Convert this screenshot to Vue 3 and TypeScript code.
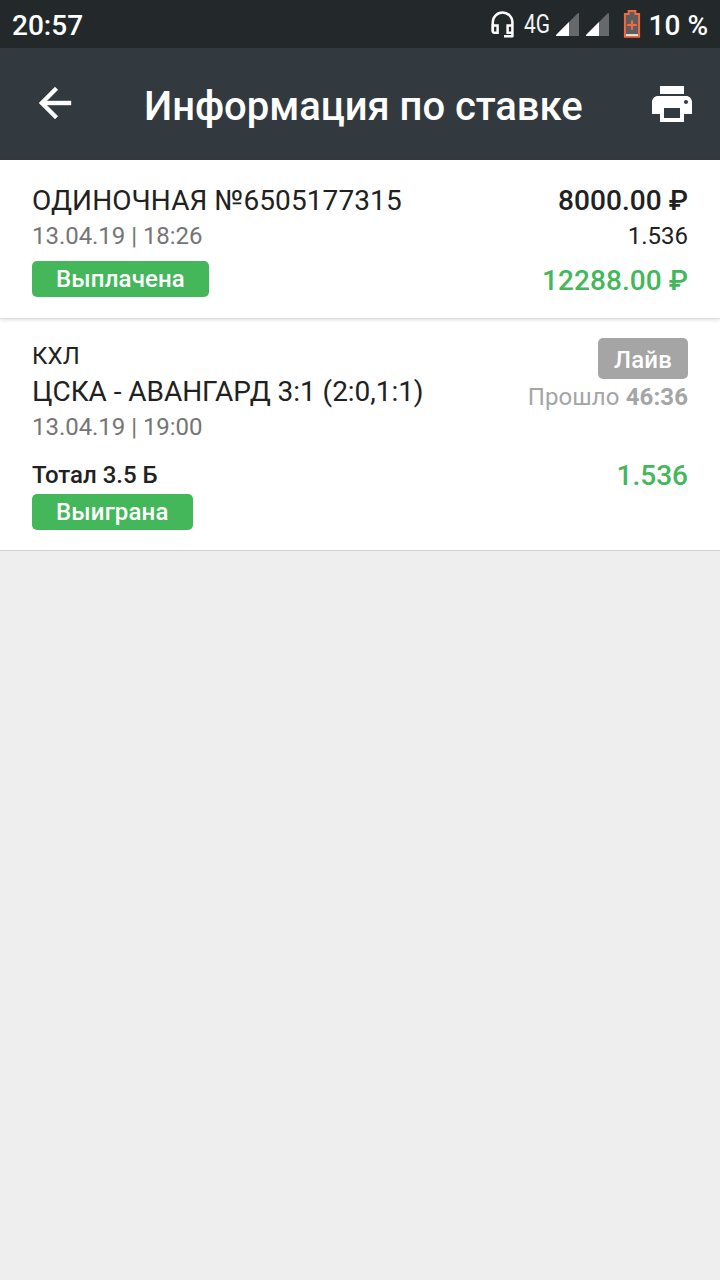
<script setup lang="ts">
interface Bet {
  title: string
  date: string
  status: string
  stake: string
  odds: string
  payout: string
}

interface BetEvent {
  league: string
  match: string
  date: string
  outcome: string
  status: string
  mode: string
  elapsedLabel: string
  elapsed: string
  odds: string
}

const bet: Bet = {
  title: 'ОДИНОЧНАЯ №6505177315',
  date: '13.04.19 | 18:26',
  status: 'Выплачена',
  stake: '8000.00 ₽',
  odds: '1.536',
  payout: '12288.00 ₽',
}

const event: BetEvent = {
  league: 'КХЛ',
  match: 'ЦСКА - АВАНГАРД 3:1 (2:0,1:1)',
  date: '13.04.19 | 19:00',
  outcome: 'Тотал 3.5 Б',
  status: 'Выиграна',
  mode: 'Лайв',
  elapsedLabel: 'Прошло',
  elapsed: '46:36',
  odds: '1.536',
}
</script>

<template>
  <div class="screen">
    <div class="status-bar">
      <span class="clock">20:57</span>
      <div class="indicators">
        <svg class="headset" width="26" height="30" viewBox="0 0 26 30" fill="none" stroke="#fff" stroke-width="2.5">
          <path d="M2.8 21.5V12.2A9.8 9.8 0 0 1 22.4 12.2V26.2H14" stroke-linejoin="round" />
          <path d="M2.8 15.6H7.6V22.8H4.3Q2.8 22.8 2.8 21.3Z M22.4 15.6H17.6V22.8H22.4" />
        </svg>
        <svg class="network" width="28" height="32" viewBox="0 0 28 32">
          <text x="0" y="23.5" textLength="26" lengthAdjust="spacingAndGlyphs">4G</text>
        </svg>
        <svg v-for="n in 2" :key="n" class="signal" width="23" height="23" viewBox="0 0 23 23">
          <path d="M.5 21.5L21.5 .5Q23 -.7 23 1V23H1Q-.8 23 .5 21.5Z" fill="#65696c" />
          <path d="M.5 21.5L13 9V23H1Q-.8 23 .5 21.5Z" fill="#fff" />
        </svg>
        <svg class="battery" width="18" height="28" viewBox="0 0 18 28">
          <path d="M5.6 1H12.4V4H16.1V26.8H1.9V4H5.6Z" fill="#5b5d5e" stroke="#f4693f" stroke-width="2" />
          <path d="M3 25H15" stroke="#fff" stroke-width="1.6" />
          <path d="M9 10.2V19.8M4.2 15H13.8" stroke="#f4693f" stroke-width="2.2" />
        </svg>
        <span class="percent">10 %</span>
      </div>
    </div>

    <header class="app-bar">
      <svg class="back" width="48" height="48" viewBox="0 0 24 24" fill="#fff" stroke="#fff" stroke-width="0.2">
        <path d="M20 11H7.83l5.59-5.59L12 4l-8 8 8 8 1.41-1.41L7.83 13H20v-2z" />
      </svg>
      <h1>Информация по ставке</h1>
      <svg class="print" width="48" height="48" viewBox="0 0 24 24" fill="#fff">
        <path d="M19 8H5c-1.66 0-3 1.34-3 3v6h4v4h12v-4h4v-6c0-1.66-1.34-3-3-3zm-3 11H8v-5h8v5zm3-7c-.55 0-1-.45-1-1s.45-1 1-1 1 .45 1 1-.45 1-1 1zm-1-9H6v4h12V3z" />
      </svg>
    </header>

    <section class="summary">
      <div class="column">
        <div class="large title">{{ bet.title }}</div>
        <div class="small muted">{{ bet.date }}</div>
        <span class="badge">{{ bet.status }}</span>
      </div>
      <div class="column right">
        <div class="large strong sum">{{ bet.stake }}</div>
        <div class="small">{{ bet.odds }}</div>
        <div class="large strong sum win payout">{{ bet.payout }}</div>
      </div>
    </section>

    <section class="event">
      <div class="column">
        <div class="small">{{ event.league }}</div>
        <div class="large match">{{ event.match }}</div>
        <div class="small muted">{{ event.date }}</div>
        <div class="small strong outcome">{{ event.outcome }}</div>
        <span class="badge">{{ event.status }}</span>
      </div>
      <div class="column right">
        <span class="badge live">{{ event.mode }}</span>
        <div class="small elapsed">{{ event.elapsedLabel }} <b>{{ event.elapsed }}</b></div>
        <div class="large strong win event-odds">{{ event.odds }}</div>
      </div>
    </section>
  </div>
</template>

<style>
body {
  margin: 0;
  background: #eee;
}
</style>

<style scoped>
.screen {
  width: 720px;
  height: 1280px;
  background: #eee;
  color: #212121;
  font-family: Roboto, "Noto Sans", sans-serif;
  overflow: hidden;
}
.status-bar {
  box-sizing: border-box;
  height: 48px;
  padding: 0 12px;
  display: flex;
  justify-content: space-between;
  background: #23282b;
  color: #fff;
  font-size: 28px;
  font-weight: 500;
  line-height: 33px;
}
.clock,
.percent {
  margin-top: 9px;
  white-space: nowrap;
}
.indicators {
  display: flex;
  align-items: flex-start;
}
.headset {
  margin: 10px 8px 0 0;
}
.network {
  margin: 9px 4px 0 0;
  overflow: visible;
  font-size: 25px;
  font-weight: 400;
  line-height: 29px;
  fill: #f2f3f3;
}
.signal {
  margin: 13px 7px 0 0;
}
.battery {
  margin: 10px 8px 0 7px;
}
.app-bar {
  box-sizing: border-box;
  height: 112px;
  padding: 0 24px 0 31px;
  display: flex;
  align-items: center;
  background: #323a40;
  color: #fff;
}
.back {
  margin-top: -2px;
}
h1 {
  flex: 1;
  margin: 4px 0 0 65px;
  font-size: 40px;
  font-weight: 500;
  letter-spacing: -0.04px;
  line-height: 47px;
  white-space: nowrap;
}
.summary,
.event {
  box-sizing: border-box;
  display: flex;
  justify-content: space-between;
  padding: 0 32px;
  background: #fff;
}
.summary {
  position: relative;
  height: 159px;
  padding-top: 24px;
  border-bottom: 1px solid #dcdcdc;
  box-shadow: 0 1px 4px rgba(0, 0, 0, 0.12);
}
.event {
  height: 232px;
  padding-top: 19px;
  border-bottom: 1px solid #d2d2d2;
}
.column {
  display: flex;
  flex-direction: column;
  align-items: flex-start;
  white-space: nowrap;
}
.right {
  align-items: flex-end;
}
.large {
  font-size: 28px;
  line-height: 33px;
}
.title {
  letter-spacing: 0.1px;
}
.sum {
  letter-spacing: 0.06px;
}
.small {
  margin-top: 5px;
  font-size: 24px;
  line-height: 28px;
}
.strong {
  font-weight: 500;
}
.muted {
  color: #757575;
  letter-spacing: -0.04px;
}
.win {
  color: #44b75b;
}
.badge {
  box-sizing: border-box;
  height: 36px;
  margin-top: 11px;
  padding: 0 24px;
  border-radius: 5px;
  background: #44b75b;
  color: #fff;
  font-size: 24px;
  font-weight: 500;
  letter-spacing: 0.16px;
  line-height: 37px;
}
.payout {
  margin-top: 14px;
}
.event .small:first-child {
  margin-top: 4px;
}
.match {
  margin-top: 5px;
  letter-spacing: -0.04px;
}
.outcome.small {
  margin-top: 20px;
}
.outcome + .badge {
  margin-top: 5px;
}
.live.badge {
  height: 41px;
  margin-top: 0;
  padding: 0 16px;
  background: #a5a5a5;
  line-height: 45px;
}
.elapsed.small {
  margin-top: 4px;
  color: #a5a5a5;
  letter-spacing: 0.1px;
}
.elapsed b {
  font-weight: 700;
}
.event-odds {
  margin-top: 48px;
}
</style>
